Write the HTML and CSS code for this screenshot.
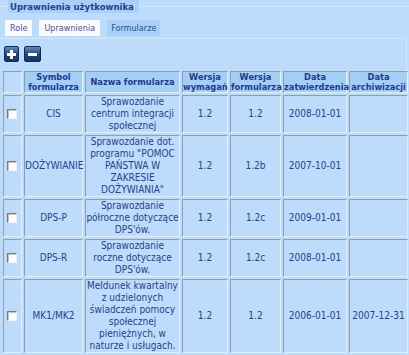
FILE: index.html
```html
<!DOCTYPE html>
<html lang="pl">
<head>
    <meta charset="UTF-8">
    <title>Uprawnienia użytkownika</title>
    <link rel="stylesheet" href="styles.css">
</head>
<body>
    <div class="panel">
        <div class="legend-row"><span class="legend">Uprawnienia użytkownika</span></div>
        <ul class="tabs">
            <li class="tab">Role</li>
            <li class="tab">Uprawnienia</li>
            <li class="tab active">Formularze</li>
        </ul>
        <div class="tab-body">
            <div class="tools">
                <button class="tool" title="Dodaj">
                    <svg width="9" height="9" viewBox="0 0 9 9"><path d="M3 0h3v3h3v3H6v3H3V6H0V3h3z" fill="#fff"/></svg>
                </button>
                <button class="tool" title="Usuń">
                    <svg width="9" height="9" viewBox="0 0 9 9"><path d="M0 3h9v3H0z" fill="#fff"/></svg>
                </button>
            </div>
            <table class="grid">
                <colgroup>
                    <col class="c-chk">
                    <col class="c-sym">
                    <col class="c-name">
                    <col class="c-wym">
                    <col class="c-form">
                    <col class="c-zatw">
                    <col class="c-arch">
                </colgroup>
                <thead>
                    <tr>
                        <th class="blank"></th>
                        <th>Symbol formularza</th>
                        <th>Nazwa formularza</th>
                        <th>Wersja wymagań</th>
                        <th>Wersja formularza</th>
                        <th>Data zatwierdzenia</th>
                        <th>Data archiwizacji</th>
                    </tr>
                </thead>
                <tbody>
                    <tr>
                        <td><input type="checkbox"></td>
                        <td>CIS</td>
                        <td>Sprawozdanie centrum integracji społecznej</td>
                        <td>1.2</td>
                        <td>1.2</td>
                        <td>2008-01-01</td>
                        <td></td>
                    </tr>
                    <tr>
                        <td><input type="checkbox"></td>
                        <td>DOŻYWIANIE</td>
                        <td>Sprawozdanie dot. programu "POMOC PAŃSTWA W ZAKRESIE DOŻYWIANIA"</td>
                        <td>1.2</td>
                        <td>1.2b</td>
                        <td>2007-10-01</td>
                        <td></td>
                    </tr>
                    <tr>
                        <td><input type="checkbox"></td>
                        <td>DPS-P</td>
                        <td>Sprawozdanie półroczne dotyczące DPS'ów.</td>
                        <td>1.2</td>
                        <td>1.2c</td>
                        <td>2009-01-01</td>
                        <td></td>
                    </tr>
                    <tr>
                        <td><input type="checkbox"></td>
                        <td>DPS-R</td>
                        <td>Sprawozdanie roczne dotyczące DPS'ów.</td>
                        <td>1.2</td>
                        <td>1.2c</td>
                        <td>2008-01-01</td>
                        <td></td>
                    </tr>
                    <tr>
                        <td><input type="checkbox"></td>
                        <td>MK1/MK2</td>
                        <td>Meldunek kwartalny z udzielonych świadczeń pomocy społecznej pieniężnych, w naturze i usługach.</td>
                        <td>1.2</td>
                        <td>1.2</td>
                        <td>2006-01-01</td>
                        <td>2007-12-31</td>
                    </tr>
                </tbody>
            </table>
        </div>
    </div>
</body>
</html>
```

FILE: styles.css
```css
body { margin: 0; background: #bddcfb; font-family: "DejaVu Sans Condensed", "DejaVu Sans", sans-serif; font-stretch: condensed; font-size: 10px; color: #27408f; overflow: hidden; }
.panel { width: 409px; }
.legend-row { display: flex; align-items: center; height: 13px; }
.legend-row::before { content: ""; width: 8px; height: 1px; background: #d3e8fc; }
.legend-row::after { content: ""; flex: 1; height: 1px; background: #d3e8fc; }
.legend { background: #a9d1f7; color: #233f8e; font-weight: bold; font-size: 9.5px; padding: 0 5px 0 2px; line-height: 13px; }
.tabs { list-style: none; margin: 7px 0 0 5px; padding: 0; display: flex; gap: 8px; }
.tab { background: #f7fbff; color: #5b4a9b; font-size: 9px; line-height: 16px; padding: 0 5px; }
.tab + .tab { margin-left: -1px; }
.tab.active { background: #a8d2f8; color: #2d4d99; padding: 0 4px; }
.tab-body { margin-top: 2px; border-top: 1px solid #d3e8fc; border-right: 1px solid #d3e8fc; width: 406px; padding-top: 7px; }
.tools { display: flex; gap: 5px; margin-left: 4px; }
.tool { width: 15px; height: 16px; padding: 0; border: 1px solid #0e2a55; border-radius: 2px; background: linear-gradient(#5b8bc0, #1d4478 55%, #143865); display: flex; align-items: center; justify-content: center; }
.tool + .tool { width: 17px; }
.grid { margin: 7px 0 0 1px; border-spacing: 2px; table-layout: fixed; width: 409px; }
.c-chk { width: 19px; }
.c-sym { width: 59px; }
.c-name { width: 95px; }
.c-wym { width: 46px; }
.c-form { width: 51px; }
.c-zatw { width: 64px; }
.c-arch { width: 59px; }
.grid th, .grid td { border: 1px solid; border-color: #8d9db2 #e4f0fc #e4f0fc #8d9db2; padding: 0; text-align: center; vertical-align: middle; }
.grid th { background: #a3cff7; color: #1d3b8c; font-weight: bold; font-size: 9.2px; line-height: 10px; height: 20px; }
.grid th.blank { background: #bddcfb; }
.grid td { background: #bddcfb; line-height: 12px; height: 36px; }
.grid td:first-child { text-align: left; padding-left: 3px; }
.grid input[type="checkbox"] { appearance: none; width: 10px; height: 10px; margin: 2px 0 0; border: 1px solid; border-color: #7a7a7a #f2f2f2 #f2f2f2 #7a7a7a; background: #fff; box-shadow: inset 1px 1px 0 #c4c4c4; }
```
